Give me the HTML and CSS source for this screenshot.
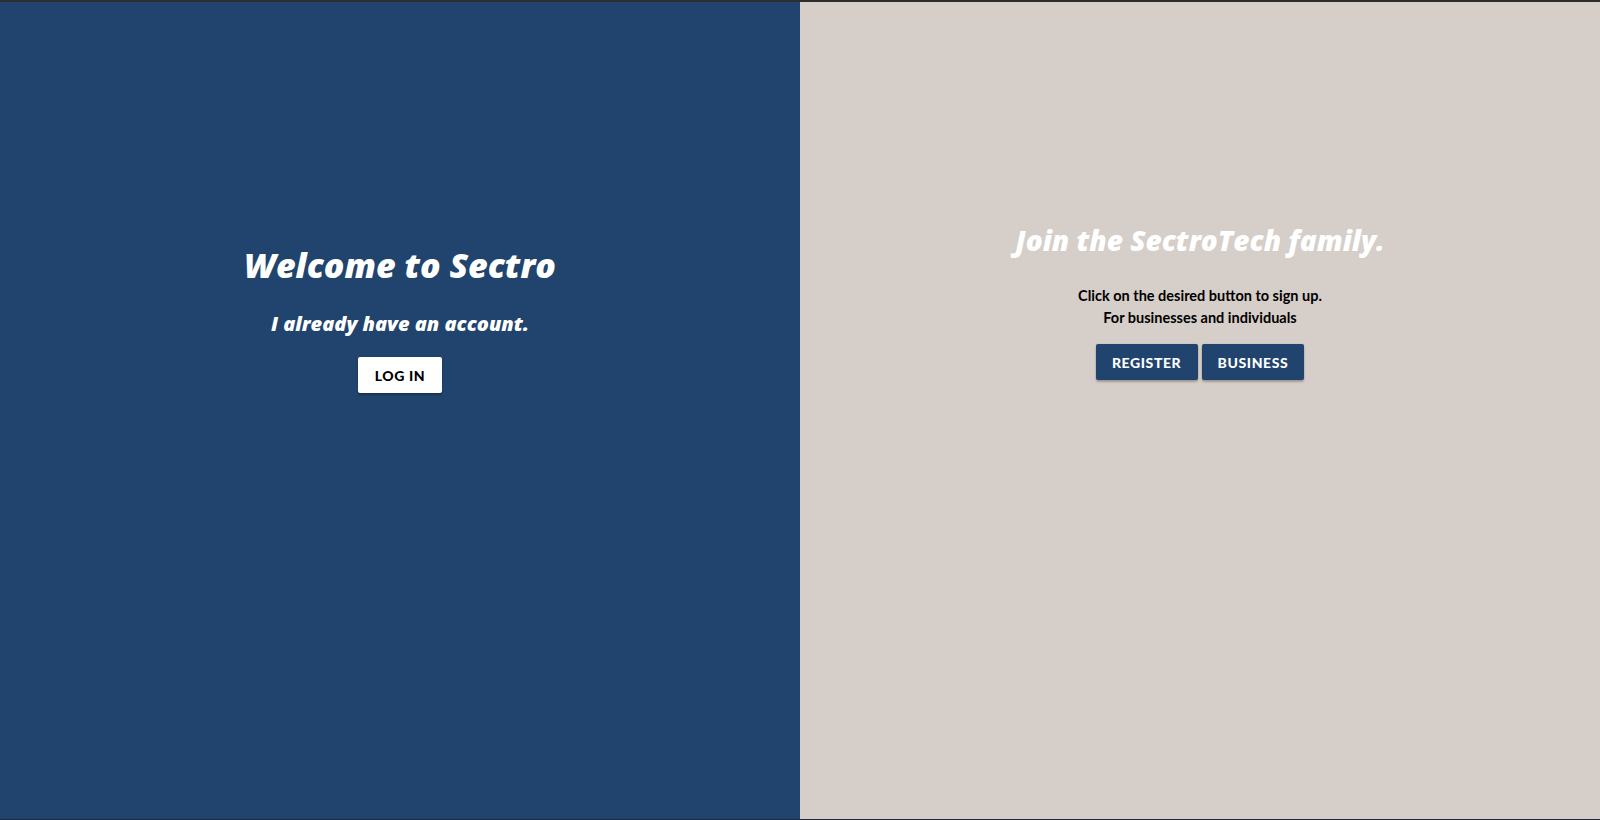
FILE: index.html
```html
<!DOCTYPE html>
<html lang="en">
<head>
<meta charset="utf-8">
<title>Sectro</title>
<link rel="stylesheet" href="styles.css">
</head>
<body>
<div class="topbar"></div>
<main class="split">
  <section class="panel panel-left">
    <h1 class="title">Welcome to Sectro</h1>
    <h2 class="subtitle">I already have an account.</h2>
    <div class="actions">
      <button class="btn btn-light">LOG IN</button>
    </div>
  </section>
  <section class="panel panel-right">
    <h1 class="title title-sm">Join the SectroTech family.</h1>
    <p class="lead">Click on the desired button to sign up.<br>For businesses and individuals</p>
    <div class="actions">
      <button class="btn btn-dark">REGISTER</button>
      <button class="btn btn-dark">BUSINESS</button>
    </div>
  </section>
</main>
<div class="bottombar"></div>
</body>
</html>
```
FILE: styles.css
```css
html, body {
  margin: 0;
  padding: 0;
  height: 100%;
}
body {
  display: flex;
  flex-direction: column;
  font-family: "Lato", "Open Sans", sans-serif;
  background: #2b2b2b;
}
.topbar {
  height: 2px;
  background: #2d2d2d;
  flex: none;
}
.bottombar {
  height: 1px;
  background: #1d2a3c;
  flex: none;
}
.split {
  flex: 1;
  display: flex;
}
.panel {
  flex: 1;
  display: flex;
  flex-direction: column;
  align-items: center;
  text-align: center;
}
.panel-left {
  background: #20446d;
  padding-top: 243px;
}
.panel-right {
  background: #d6cec8;
  padding-top: 220px;
}
.title {
  margin: 0;
  color: #fff;
  font-family: "Open Sans", "Lato", sans-serif;
  font-size: 34px;
  line-height: 40px;
  font-weight: 800;
  font-style: italic;
}
.title-sm {
  font-size: 28px;
  line-height: 36px;
}
.subtitle {
  margin: 26px 0 0;
  color: #fff;
  font-family: "Open Sans", "Lato", sans-serif;
  font-size: 20px;
  line-height: 26px;
  font-weight: 800;
  font-style: italic;
}
.lead {
  margin: 27px 0 0;
  color: #000;
  font-size: 14.5px;
  line-height: 22px;
  font-weight: 700;
}
.actions {
  display: flex;
  gap: 4px;
  margin-top: 20px;
}
.panel-right .actions {
  margin-top: 15px;
}
.btn {
  font-family: inherit;
  font-size: 14px;
  font-weight: 900;
  letter-spacing: 0.6px;
  height: 36px;
  padding: 0 16px;
  border: none;
  border-radius: 2px;
  cursor: pointer;
  box-shadow: 0 2px 2px rgba(0,0,0,0.24), 0 0 2px rgba(0,0,0,0.12);
}
.btn-light {
  background: #fff;
  color: #000;
  min-width: 84px;
}
.btn-dark {
  background: #21446e;
  color: #fff;
  min-width: 102px;
}
```
